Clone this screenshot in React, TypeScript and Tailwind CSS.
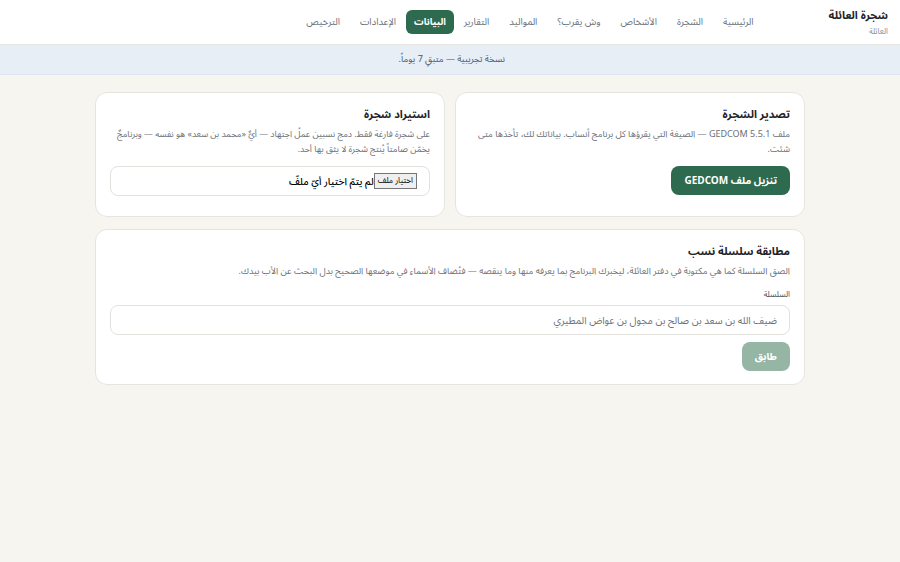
import { useState } from 'react'

const navItems = [
  'الرئيسية',
  'الشجرة',
  'الأشخاص',
  'وش يقرب؟',
  'المواليد',
  'التقارير',
  'البيانات',
  'الإعدادات',
  'الترخيص',
]

const font = { fontFamily: '"Noto Sans Arabic", "Noto Sans", sans-serif' }

function Header() {
  return (
    <header className="flex h-[45px] items-center gap-[65px] border-b border-[#e7e5df] bg-white px-3">
      <div className="flex flex-col pt-[2px]">
        <span className="text-[11px] leading-[14px] font-bold text-[#1f2328]">شجرة العائلة</span>
        <span className="mt-[4px] text-[8px] leading-[10px] text-[#8a8f96]">العائلة</span>
      </div>
      <nav className="flex items-center">
        {navItems.map(item => (
          <a
            key={item}
            className={
              item === 'البيانات'
                ? 'flex h-[24px] items-center rounded-md bg-[#2d6a4f] px-[8px] text-[9.5px] font-bold text-white'
                : 'flex h-[24px] items-center px-[10px] text-[9.5px] text-[#6b7077]'
            }
          >
            {item}
          </a>
        ))}
      </nav>
    </header>
  )
}

function Card({ children, pb = 'pb-[20px]' }: { children: React.ReactNode, pb?: string }) {
  return (
    <section className={`rounded-xl border border-[#e6e4de] bg-white px-[14px] pt-[14px] ${pb}`}>
      {children}
    </section>
  )
}

export default function App() {
  const [chain, setChain] = useState('')

  return (
    <div dir="rtl" style={font} className="min-h-[562px] bg-[#f6f5f0]">
      <Header />
      <div className="flex h-[30px] items-center border-b border-[#dde5ee] bg-[#e8eef6]">
        <p className="mr-[395px] text-[9px] text-[#3f5a78]">نسخة تجريبية — متبقٍ 7 يوماً.</p>
      </div>

      <main className="mx-auto flex w-[710px] flex-col gap-3 pt-[17px]">
        <div className="grid grid-cols-2 gap-[10px]">
          <Card>
            <h2 className="text-[11px] leading-[16px] font-bold text-[#1f2328]">تصدير الشجرة</h2>
            <p className="mt-[4px] text-[9px] leading-[15px] text-[#6b7077]">
              ملف GEDCOM 5.5.1 — الصيغة التي يقرؤها كل برنامج أنساب. بياناتك لك، تأخذها متى شئت.
            </p>
            <button className="mt-[9px] h-[29px] rounded-lg bg-[#2d6a4f] px-[13px] text-[10px] font-bold text-white">
              تنزيل ملف GEDCOM
            </button>
          </Card>
          <Card>
            <h2 className="text-[11px] leading-[16px] font-bold text-[#1f2328]">استيراد شجرة</h2>
            <p className="mt-[4px] text-[8.8px] leading-[15px] text-[#6b7077]">
              على شجرة فارغة فقط. دمج نسبين عملُ اجتهاد — أيٌّ «محمد بن سعد» هو نفسه — وبرنامجٌ يخمّن صامتاً يُنتج شجرة لا يثق بها أحد.
            </p>
            <div className="mt-[9px] flex h-[30px] items-center rounded-lg border border-[#e3e1db] px-[12px]">
              <span className="border border-[#767676] bg-[#efefef] px-[3px] text-[8px] leading-[14px] text-black">اختيار ملف</span>
              <span className="text-[10px] font-medium text-black">لم يتمّ اختيار أيّ ملفّ</span>
            </div>
          </Card>
        </div>

        <Card pb="pb-[13px]">
          <h2 className="text-[11px] leading-[16px] font-bold text-[#1f2328]">مطابقة سلسلة نسب</h2>
          <p className="mt-[4px] text-[9px] leading-[15px] text-[#6b7077]">
            الصق السلسلة كما هي مكتوبة في دفتر العائلة، ليخبرك البرنامج بما يعرفه منها وما ينقصه — فتُضاف الأسماء في موضعها الصحيح بدل البحث عن الأب بيدك.
          </p>
          <label className="mt-[10px] block text-[8px] leading-[12px] text-[#4b5057]">السلسلة</label>
          <input
            value={chain}
            onChange={e => setChain(e.target.value)}
            placeholder="ضيف الله بن سعد بن صالح بن مجول بن عواض المطيري"
            className="mt-[4px] h-[30px] w-full rounded-lg border border-[#e3e1db] px-[12px] text-[10px] text-[#1f2328] outline-none placeholder:text-[#6b7077]"
          />
          <button
            disabled={!chain}
            className="mt-[7px] h-[29px] rounded-lg bg-[#2d6a4f] px-[13px] text-[10px] font-bold text-white disabled:bg-[#95b5a5]"
          >
            طابق
          </button>
        </Card>
      </main>
    </div>
  )
}
